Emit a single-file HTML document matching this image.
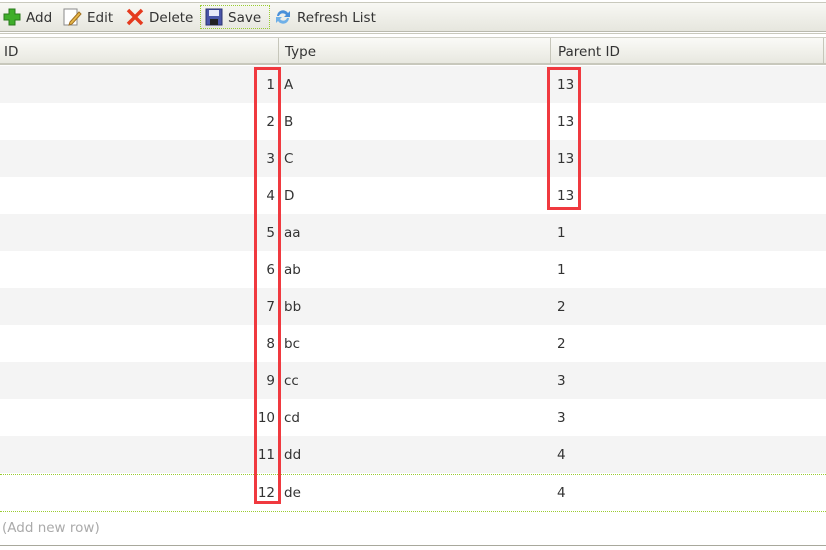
<!DOCTYPE html>
<html><head><meta charset="utf-8"><style>
*{margin:0;padding:0;box-sizing:border-box}
body{width:826px;height:550px;background:#fff;font-family:"DejaVu Sans","Liberation Sans",sans-serif;font-size:13.5px;color:#333;position:relative;overflow:hidden}
.tb{position:absolute;left:0;top:2px;width:826px;height:30px;border-top:1px solid #c9c9bd;background:linear-gradient(#f8f8f4,#e6e6de);border-bottom:1px solid #b9b9ad}
.tb2{position:absolute;left:0;top:33px;width:826px;height:1px;background:#c9c9bd}
.btn{position:absolute;top:7px;height:22px;line-height:22px;white-space:nowrap}
.btn svg{position:absolute;left:0;top:0px}
.btn span{position:absolute;left:23px}
.hd{position:absolute;left:0;top:37px;width:826px;height:28px;background:linear-gradient(#fafaf7,#e8e8e0);border-top:1px solid #d0d0c6;border-bottom:2px solid #c8c8bc}
.hd div{position:absolute;top:5px}
.sep{position:absolute;top:0;width:1px;height:26px;background:#c6c6ba}
.row{position:absolute;left:0;width:826px;height:37px}
.row div{position:absolute;top:11px}
.id{right:551px;text-align:right}
.rb{position:absolute;border:3px solid #f0393f}
</style></head><body>
<div class="tb"></div><div class="tb2"></div>
<div class="btn" style="left:2px"><svg width="20" height="20"><path d="M7 2h6v5h5v6h-5v5H7v-5H2V7h5z" fill="#3fae2a" stroke="#2a7a1c"/></svg><span style="left:24px">Add</span></div>
<div class="btn" style="left:62px"><svg width="20" height="20"><rect x="2" y="2" width="13" height="16" fill="#fff" stroke="#8a8a8a"/><path d="M8 15l9-10 2 2-9 10-3 1z" fill="#e8b84a" stroke="#a07020"/></svg><span style="left:25px">Edit</span></div>
<div class="btn" style="left:125px"><svg width="20" height="20"><path d="M3 3L17 17M17 3L3 17" stroke="#e53a1e" stroke-width="3.5"/></svg><span style="left:24px">Delete</span></div>
<div style="position:absolute;left:200px;top:5px;width:70px;height:24px;border:1px dotted #9acd32"></div>
<div class="btn" style="left:204px"><svg width="20" height="20"><rect x="2" y="2" width="16" height="16" fill="#4a55a8" stroke="#2c3470"/><rect x="5" y="3" width="10" height="6" fill="#e8e8f8"/><rect x="6" y="12" width="8" height="6" fill="#222"/></svg><span style="left:24px">Save</span></div>
<div class="btn" style="left:273px"><svg width="20" height="20"><path d="M4 9a6 6 0 0 1 11-3l2-2v6h-6l2-2a4 4 0 0 0-7 1z" fill="#4a90d9"/><path d="M16 11a6 6 0 0 1-11 3l-2 2v-6h6l-2 2a4 4 0 0 0 7-1z" fill="#6fb0e8"/></svg><span style="left:24px">Refresh List</span></div>
<div class="hd"><div style="left:4px;top:6px">ID</div><span class="sep" style="left:278px"></span><div style="left:285px;top:6px">Type</div><span class="sep" style="left:550px"></span><div style="left:558px;top:6px">Parent ID</div><span class="sep" style="left:823px"></span></div>

<div class="row" style="top:66px;background:#f4f4f4"><div class="id">1</div><div style="left:284px">A</div><div style="left:557px">13</div></div>
<div class="row" style="top:103px"><div class="id">2</div><div style="left:284px">B</div><div style="left:557px">13</div></div>
<div class="row" style="top:140px;background:#f4f4f4"><div class="id">3</div><div style="left:284px">C</div><div style="left:557px">13</div></div>
<div class="row" style="top:177px"><div class="id">4</div><div style="left:284px">D</div><div style="left:557px">13</div></div>
<div class="row" style="top:214px;background:#f4f4f4"><div class="id">5</div><div style="left:284px">aa</div><div style="left:557px">1</div></div>
<div class="row" style="top:251px"><div class="id">6</div><div style="left:284px">ab</div><div style="left:557px">1</div></div>
<div class="row" style="top:288px;background:#f4f4f4"><div class="id">7</div><div style="left:284px">bb</div><div style="left:557px">2</div></div>
<div class="row" style="top:325px"><div class="id">8</div><div style="left:284px">bc</div><div style="left:557px">2</div></div>
<div class="row" style="top:362px;background:#f4f4f4"><div class="id">9</div><div style="left:284px">cc</div><div style="left:557px">3</div></div>
<div class="row" style="top:399px"><div class="id">10</div><div style="left:284px">cd</div><div style="left:557px">3</div></div>
<div class="row" style="top:436px;background:#f4f4f4"><div class="id">11</div><div style="left:284px">dd</div><div style="left:557px">4</div></div>
<div class="row" style="top:474px;border-top:1px dotted #9acd32;border-bottom:1px dotted #9acd32;height:38px"><div class="id" style="top:10px">12</div><div style="left:284px;top:10px">de</div><div style="left:557px;top:10px">4</div></div>
<div style="position:absolute;left:2px;top:520px;color:#aaa">(Add new row)</div>
<div style="position:absolute;left:0;top:545px;width:826px;height:1px;background:#a8a89c"></div>

<div class="rb" style="left:254px;top:67px;width:27px;height:437px"></div>
<div class="rb" style="left:547px;top:67px;width:34px;height:143px"></div>
</body></html>
